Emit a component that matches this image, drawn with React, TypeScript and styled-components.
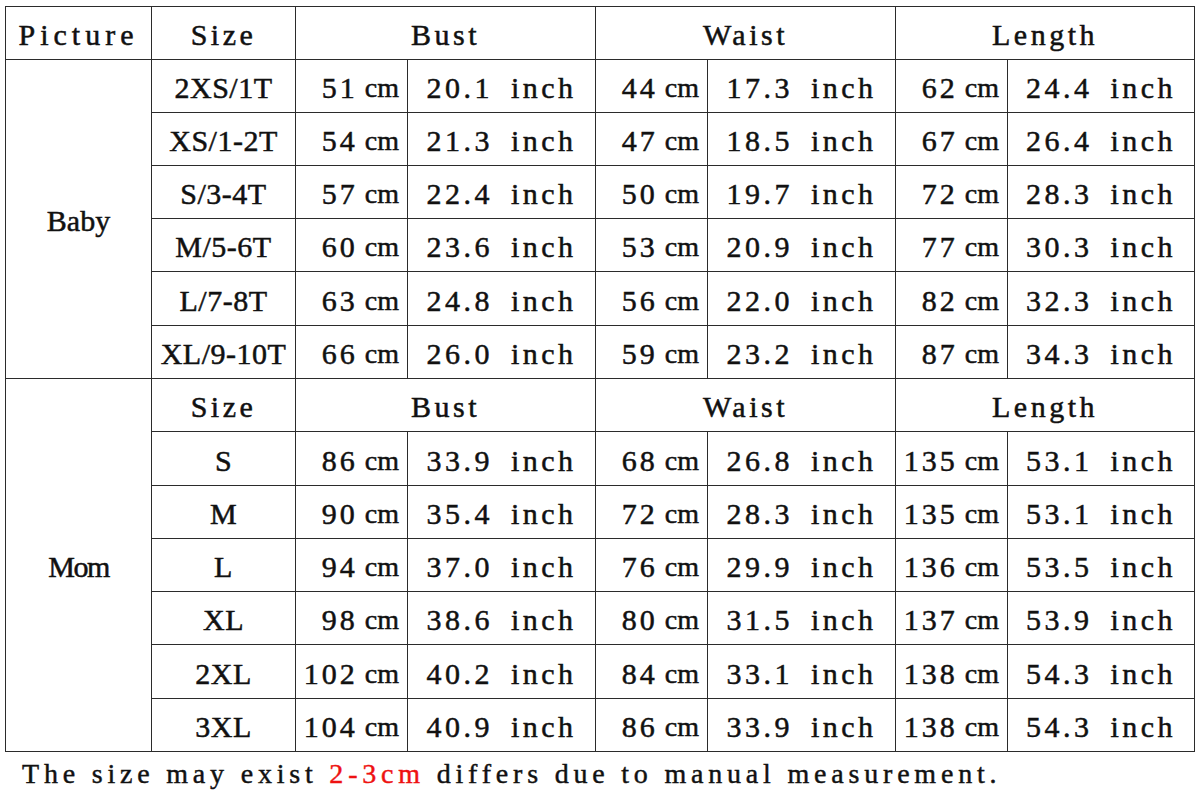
import React from 'react'
import styled, { createGlobalStyle } from 'styled-components'

const GlobalStyle = createGlobalStyle`
    html, body {
        margin: 0;
        padding: 0;
        background: #ffffff;
    }
    body {
        font-family: 'Liberation Serif', 'Times New Roman', serif;
        color: #111111;
    }
`

const Page = styled.div`
    width: 1200px;
    height: 790px;
    padding: 6px 0 0 5px;
    box-sizing: border-box;
    overflow: hidden;
`

const Chart = styled.div`
    display: grid;
    grid-template-columns: 145px 143px 111px 187px 111px 187px 111px 186px;
    grid-template-rows: 52px 52px 52px 52px 52px 53px 52px 52px 53px 52px 52px 52px 53px 52px;
    gap: 1px;
    padding: 1px;
    width: 1190px;
    box-sizing: border-box;
    background: #2b2b2b;
`

const Cell = styled.div<{ $span?: number; $rows?: number; $align?: 'center' | 'right'; $spacing?: number }>`
    display: flex;
    align-items: center;
    justify-content: ${p => (p.$align === 'right' ? 'flex-end' : 'center')};
    padding: ${p => (p.$align === 'right' ? '4px 8px 0 0' : '4px 0 0 0')};
    background: #ffffff;
    font-size: 30px;
    line-height: 1;
    letter-spacing: ${p => (p.$spacing ?? 3.5)}px;
    word-spacing: 7px;
    white-space: pre;
    -webkit-text-stroke: 0.5px #111111;
    grid-column: span ${p => p.$span || 1};
    grid-row: span ${p => p.$rows || 1};
`

const Unit = styled.span`
    font-size: 28px;
    letter-spacing: 0;
    word-spacing: 0;
`

const Note = styled.div`
    padding: 8px 0 0 17px;
    font-size: 28px;
    line-height: 1;
    letter-spacing: 4.8px;
    white-space: pre;
    -webkit-text-stroke: 0.45px #111111;
`

const Red = styled.span`
    color: #ee1111;
    -webkit-text-stroke: 0.45px #ee1111;
`

type Row = [string, number, string, number, string, number, string]

const baby: Row[] = [
    ['2XS/1T', 51, '20.1', 44, '17.3', 62, '24.4'],
    ['XS/1-2T', 54, '21.3', 47, '18.5', 67, '26.4'],
    ['S/3-4T', 57, '22.4', 50, '19.7', 72, '28.3'],
    ['M/5-6T', 60, '23.6', 53, '20.9', 77, '30.3'],
    ['L/7-8T', 63, '24.8', 56, '22.0', 82, '32.3'],
    ['XL/9-10T', 66, '26.0', 59, '23.2', 87, '34.3'],
]

const mom: Row[] = [
    ['S', 86, '33.9', 68, '26.8', 135, '53.1'],
    ['M', 90, '35.4', 72, '28.3', 135, '53.1'],
    ['L', 94, '37.0', 76, '29.9', 136, '53.5'],
    ['XL', 98, '38.6', 80, '31.5', 137, '53.9'],
    ['2XL', 102, '40.2', 84, '33.1', 138, '54.3'],
    ['3XL', 104, '40.9', 86, '33.9', 138, '54.3'],
]

const Cm: React.FC<{ value: number }> = ({ value }) => (
    <Cell $align="right" $spacing={3}>
        {value}
        <Unit> cm</Unit>
    </Cell>
)

const Inch: React.FC<{ value: string }> = ({ value }) => (
    <Cell>{`${value} inch`}</Cell>
)

const DataRows: React.FC<{ rows: Row[] }> = ({ rows }) => (
    <>
        {rows.map(([size, bc, bi, wc, wi, lc, li], i) => (
            <React.Fragment key={size + i}>
                <Cell $spacing={0.5}>{size}</Cell>
                <Cm value={bc} />
                <Inch value={bi} />
                <Cm value={wc} />
                <Inch value={wi} />
                <Cm value={lc} />
                <Inch value={li} />
            </React.Fragment>
        ))}
    </>
)

const Heads: React.FC = () => (
    <>
        <Cell>Size</Cell>
        <Cell $span={2}>Bust</Cell>
        <Cell $span={2}>Waist</Cell>
        <Cell $span={2}>Length</Cell>
    </>
)

export default function App() {
    return (
        <Page>
            <GlobalStyle />
            <Chart>
                <Cell $spacing={5}>Picture</Cell>
                <Heads />
                <Cell $rows={6} $spacing={0}>Baby</Cell>
                <DataRows rows={baby} />
                <Cell $rows={7} $spacing={-1.5}>Mom</Cell>
                <Heads />
                <DataRows rows={mom} />
            </Chart>
            <Note>
                The size may exist <Red>2-3cm</Red> differs due to manual measurement.
            </Note>
        </Page>
    )
}
